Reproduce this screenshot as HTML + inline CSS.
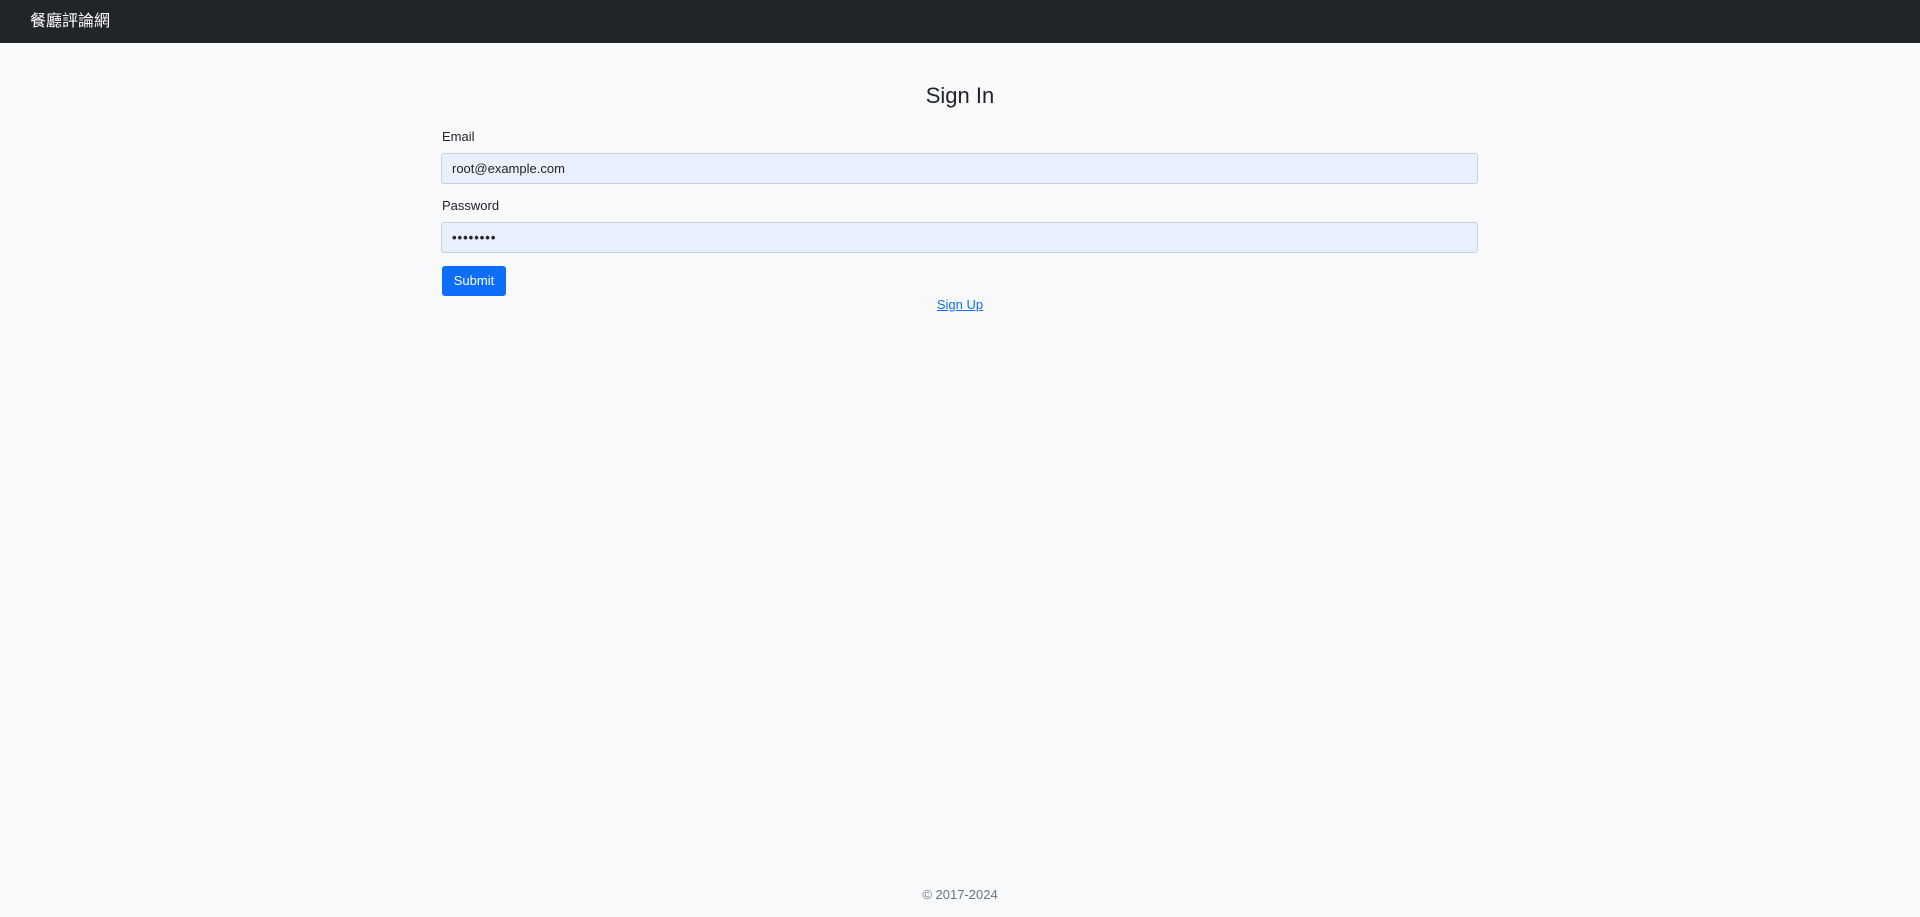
<!DOCTYPE html>
<html><head><meta charset="utf-8">
<style>
*{box-sizing:border-box;margin:0;padding:0}
html,body{width:1920px;height:917px;overflow:hidden;background:#f8f9fa;font-family:"Liberation Sans","Noto Sans CJK TC",sans-serif;color:#212529;font-size:13px}
.nav{position:absolute;left:0;top:0;width:1920px;height:43px;background:#212529}
.brand{position:absolute;left:30px;top:12px;color:#fff;font-size:16px;line-height:20px}
.title{position:absolute;left:0;width:1920px;top:82px;text-align:center;font-size:22px;line-height:28px}
.lbl{position:absolute;left:442px;font-size:13px;line-height:16px}
.inp{position:absolute;left:441px;width:1037px;height:31px;background:#e8f0fe;border:1px solid #c9d0da;border-radius:3px;padding-left:10px;font-size:13px;line-height:29px;color:#212529}
.btn{position:absolute;left:442px;top:266px;width:64px;height:30px;background:#0d6efd;border-radius:3px;color:#fff;font-size:13px;line-height:30px;text-align:center}
.su{position:absolute;left:0;width:1920px;top:297px;text-align:center;font-size:13px;line-height:16px}
.su span{color:#0d6efd;text-decoration:underline}
.ft{position:absolute;left:0;width:1920px;top:887px;text-align:center;font-size:13px;line-height:16px;color:#6c757d}
</style></head><body>
<div class="nav"><div class="brand">餐廳評論網</div></div>
<div class="title">Sign In</div>
<div class="lbl" style="top:129px">Email</div>
<div class="inp" style="top:153px">root@example.com</div>
<div class="lbl" style="top:198px">Password</div>
<div class="inp" style="top:222px;letter-spacing:1px;font-weight:bold">••••••••</div>
<div class="btn">Submit</div>
<div class="su"><span>Sign Up</span></div>
<div class="ft">© 2017-2024</div>
</body></html>
